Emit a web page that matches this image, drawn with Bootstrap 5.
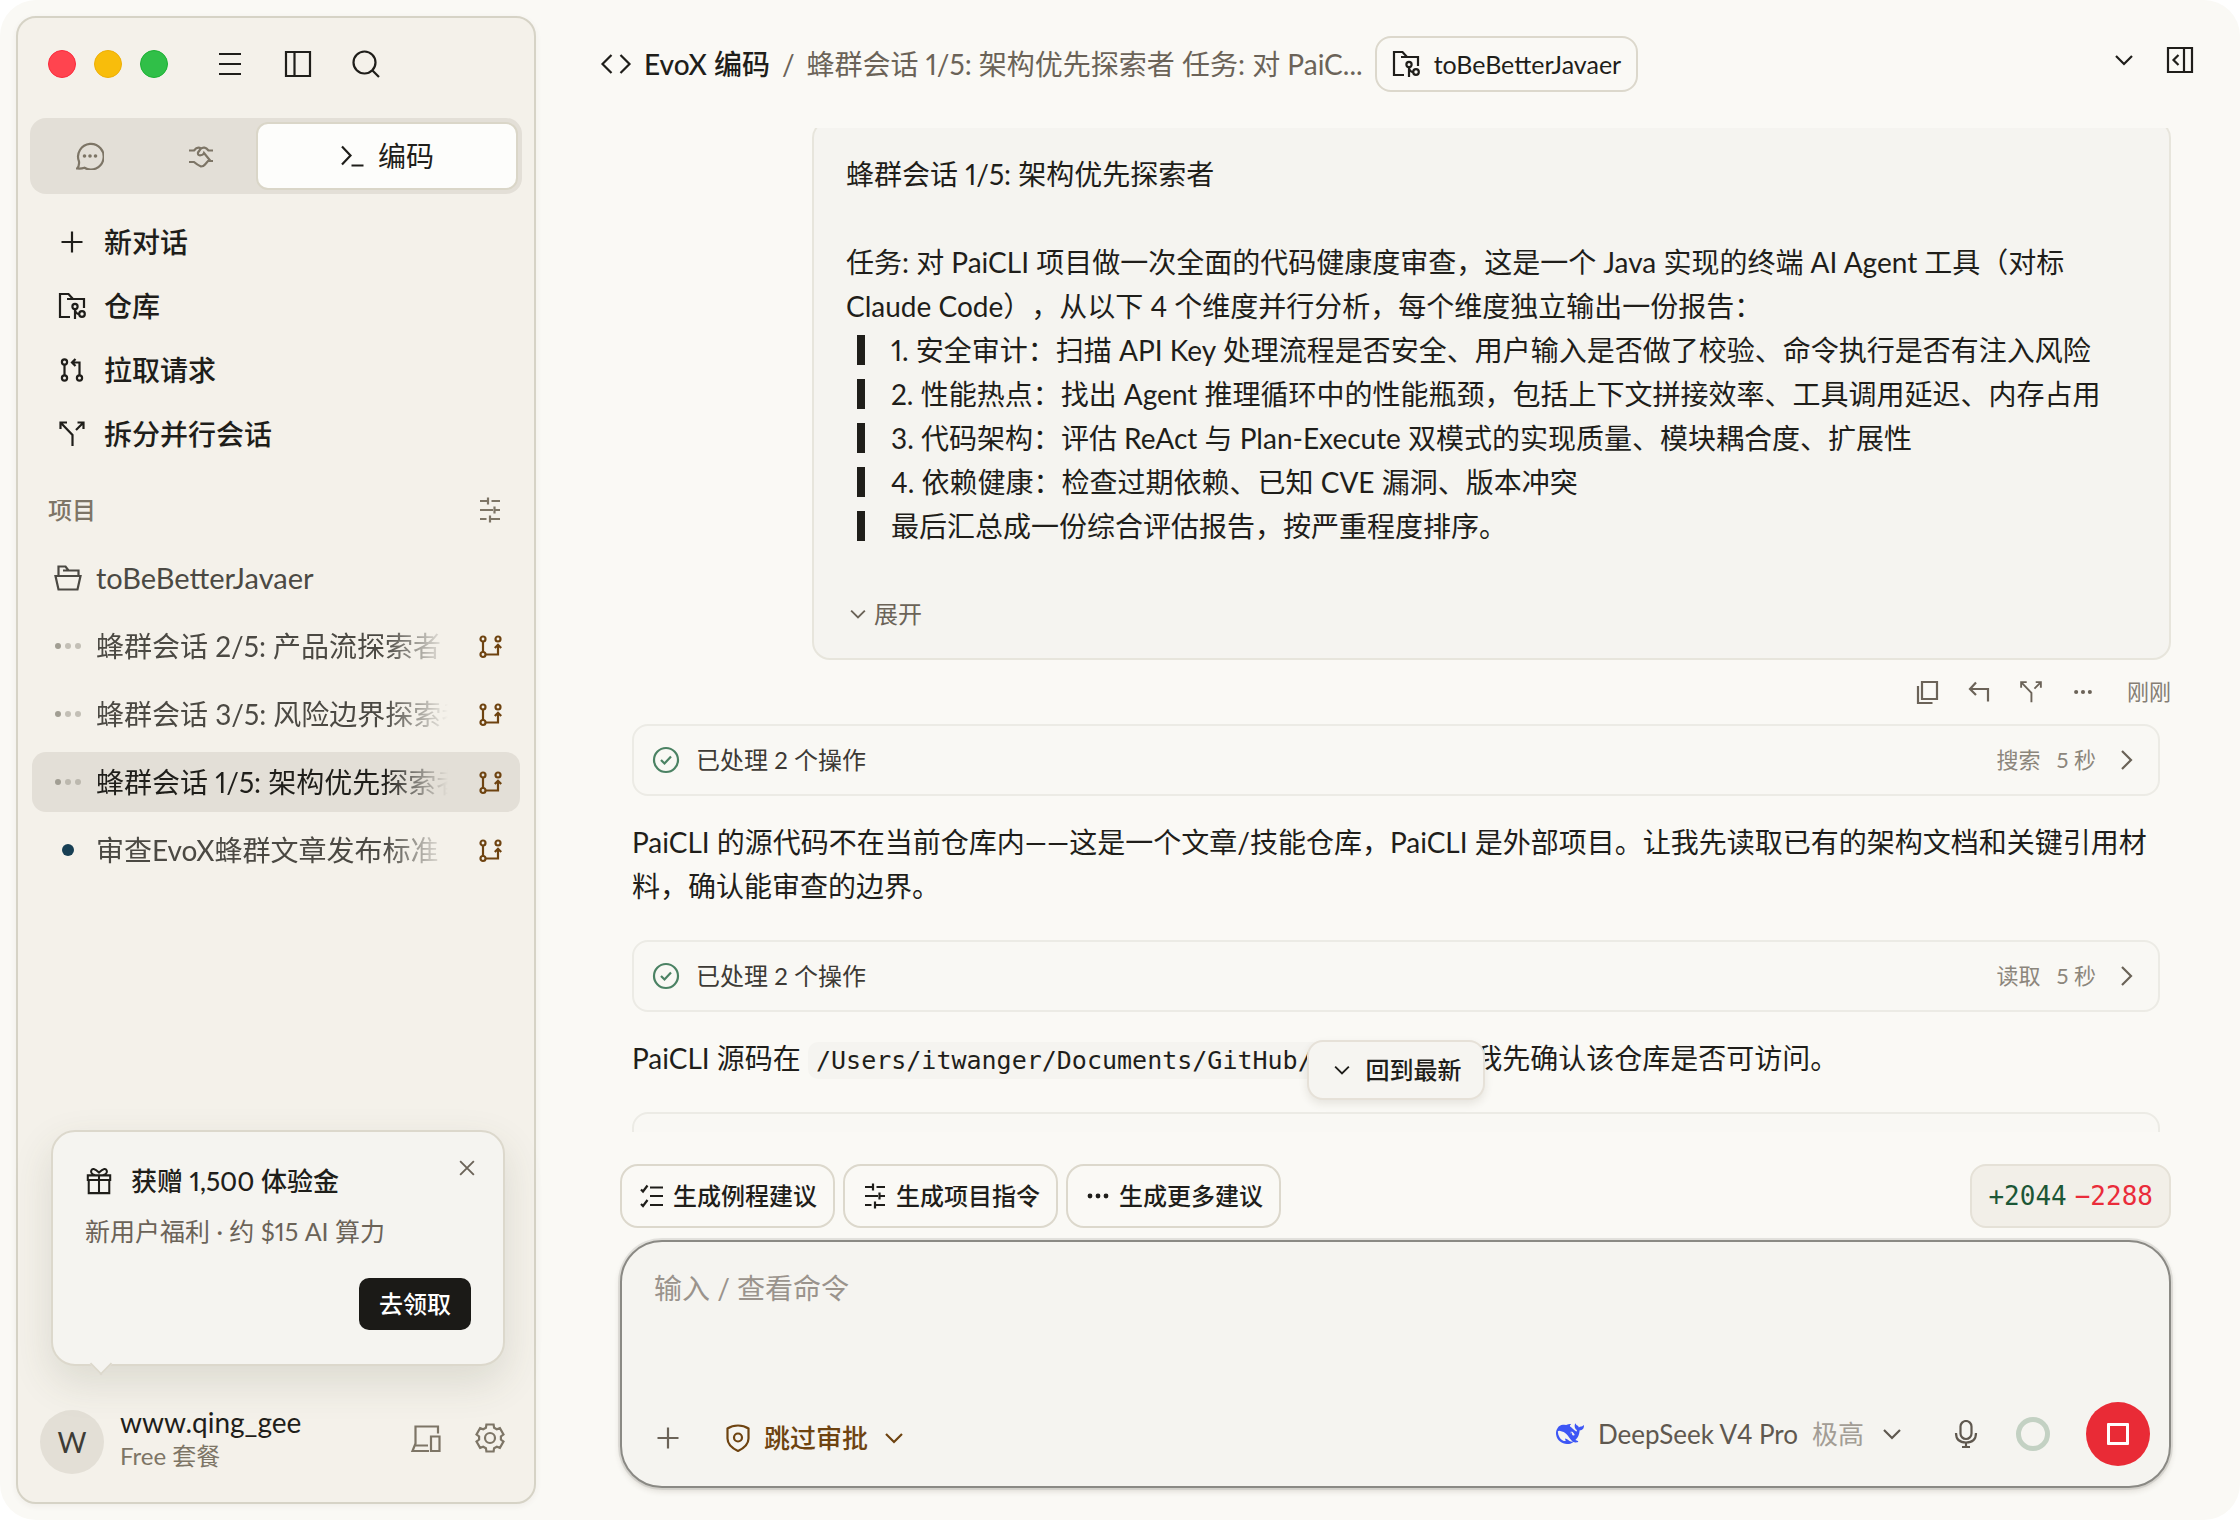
<!DOCTYPE html>
<html lang="zh-CN">
<head>
<meta charset="utf-8">
<meta name="viewport" content="width=device-width, initial-scale=1">
<title>EvoX 编码</title>
<link href="https://cdn.jsdelivr.net/npm/bootstrap@5.3.0/dist/css/bootstrap.min.css" rel="stylesheet">
<style>
  :root { --ink:#1f1e1a; --soft:#4b4943; --muted:#6b6358; --dim:#7d7566; --line:#dcd8cc; --paper:#faf9f5; --card:#f5f4f0; --side:#f4f1ea; --sel:#e3dfd7; --brown:#6e4310; }
  html { background:#fff; }
  body { font-family:Lato, "Noto Sans CJK SC", sans-serif; font-size:28px; line-height:44px; font-variant-numeric:proportional-nums; text-spacing-trim:space-all; color:var(--ink); background:transparent; }
  .ico { width:28px; height:28px; flex:none; fill:none; stroke:currentColor; stroke-width:2.2; display:block; overflow:visible; }
  .ico-s { width:24px; height:24px; }
  .ico-l { width:32px; height:32px; }
  .ico-ok { color:#4b8263; }
  .btn { --bs-btn-color:inherit; font-size:inherit; line-height:inherit; }
  .ibtn { padding:0; border:0; color:inherit; line-height:1; }
  .shell { background:var(--paper); border-radius:36px; height:100vh; overflow:hidden; }
  .tone-m { color:var(--muted); }

  .side { width:520px; margin:16px 0 16px 16px; background:var(--side); border:2px solid #d6d3c6; border-radius:20px; flex:none; box-shadow:0 2px 6px rgba(60,50,30,.06); }
  .titlebar { height:92px; padding:0 30px; margin-bottom:8px; }
  .light { width:28px; height:28px; border-radius:50%; border:1px solid; }
  .light-r { background:#ff444f; border-color:#fb2a3c; }
  .light-y { background:#f8bd0b; border-color:#eeaf06; }
  .light-g { background:#30bf48; border-color:#1bb133; }
  .lights { gap:18px; margin-right:48px; }
  .tools { gap:40px; }
  .tabs { margin:0 12px; height:76px; padding:4px; background:var(--sel); border-radius:16px; color:var(--dim); }
  .tabs .nav-link { border-radius:12px; padding:0; color:var(--dim); border:2px solid transparent; }
  .tab-a { width:111px; }
  .tabs .nav-link.active { flex:1; background:#fdfdfb; color:var(--ink); border-color:#dad6c8; gap:14px; }
  .menu { margin-top:16px; }
  .menu .nav-link { height:64px; padding:0 40px; gap:18px; color:var(--ink); font-weight:500; }
  .sect { height:56px; margin:16px 0 10px; padding:0 30px; font-size:24px; color:var(--dim); font-weight:500; }
  .proj { gap:8px; padding:0 14px; }
  .proj .nav-link { height:60px; padding:0 16px 0 22px; gap:14px; color:var(--soft); border-radius:14px; }
  .proj .nav-link.active { background:var(--sel); color:var(--ink); }
  .proj .root-dir { font-size:29px; }
  .fade-t { flex:1; min-width:0; overflow:hidden; white-space:nowrap; margin-right:14px; -webkit-mask-image:linear-gradient(90deg,#000 82%,transparent); mask-image:linear-gradient(90deg,#000 82%,transparent); }
  .brn { color:var(--brown); font-weight:500; }

  .promo { margin:0 29px 0 33px; height:236px; border:2px solid var(--line); border-radius:24px; background:var(--card); padding:25px 32px 34px; box-shadow:0 16px 40px rgba(70,75,50,.14); }
  .promo::after { content:""; position:absolute; left:40px; bottom:-8px; width:16px; height:16px; background:var(--card); transform:rotate(45deg); border:2px solid var(--line); border-top:0; border-left:0; }
  .promo-t { font-size:26px; font-weight:500; gap:18px; line-height:48px; }
  .promo-s { font-size:25px; line-height:52px; color:var(--muted); }
  .promo-x { position:absolute; right:24px; top:24px; color:var(--muted); }
  .claim { height:52px; padding:0 20px; border-radius:10px; background:#1b1a17; color:#fff; font-size:24px; line-height:50px; font-weight:500; border:0; }
  .user { margin:44px 0 28px; padding:0 28px 0 22px; height:64px; }
  .avatar { width:64px; height:64px; border-radius:50%; background:#e3dfd6; font-size:28px; color:#3e3c36; margin-right:16px; }
  .u-text { padding-bottom:6px; }
  .u-name { font-size:28px; line-height:34px; }
  .u-plan { font-size:24px; line-height:34px; color:var(--dim); }
  .u-tools { gap:32px; padding-bottom:8px; color:var(--dim); }

  .top { height:128px; padding:0 46px 0 64px; flex:none; }
  .crumb { gap:12px; }
  .crumb-app { font-weight:500; }
  .repo { height:56px; border:2px solid var(--line); border-radius:16px; padding:0 15px; font-size:25px; gap:14px; }
  .feed { flex:1; min-height:0; overflow:hidden; padding:0 69px 0 84px; }
  .ask { margin:-8px 0 0 192px; border:2px solid #e7e5dc; border-radius:18px; background:var(--card); padding:30px 32px 26px; }
  .quote-row { gap:26px; padding-left:11px; }
  .quote-row::before { content:""; width:8px; height:30px; background:var(--ink); flex:none; }
  .more { font-size:24px; line-height:36px; color:var(--muted); gap:4px; margin-top:48px; }
  .acts { height:64px; gap:28px; color:var(--muted); }
  .acts time { font-size:22px; margin-left:4px; color:#857e74; }
  .op { margin:0 11px 0 12px; height:72px; border:2px solid #ecebe5; border-radius:16px; background:#f9f8f4; padding:0 18px; font-size:24px; color:#3d3a35; }
  .op-r { font-size:22px; gap:16px; color:#8c867c; }
  .say { margin:24px 11px 32px 12px; }
  .say code { font-family:"DejaVu Sans Mono", monospace; font-size:25px; line-height:36px; color:var(--ink); background:var(--card); border-radius:10px; padding:4px 8px; }
  .latest-wrap { position:absolute; left:0; right:0; bottom:32px; padding:0 69px 0 84px; pointer-events:none; }
  .latest { pointer-events:auto; height:60px; width:178px; border:2px solid #e6e1d8; border-radius:16px; background:#f6f5f1; font-size:24px; font-weight:500; gap:12px; padding:0; box-shadow:0 4px 8px rgba(60,50,30,.1); }
  .dock { padding:32px 69px 32px 84px; }
  .sug { height:64px; border:2px solid var(--line); border-radius:18px; font-size:24px; font-weight:500; padding:0 16px; gap:7px; }
  .sug:hover, .repo:hover { border-color:var(--line); }
  .diff { height:64px; border:2px solid #e5e1d7; border-radius:16px; background:#f2efe8; font-family:"DejaVu Sans Mono", monospace; font-size:26px; padding:0 16px; gap:8px; }
  .plus-n { color:#1c5736; } .minus-n { color:#ea2c3a; }
  .composer { margin-top:12px; height:248px; border:2px solid #8a8984; border-radius:42px; background:var(--card); padding:24px 19px 20px 32px; box-shadow:0 0 0 2px rgba(120,118,110,.16), 0 3px 6px rgba(60,50,30,.16); }
  .composer textarea { resize:none; border:0; padding:0; background:transparent; font-size:28px; line-height:44px; color:var(--ink); border-radius:0; }
  .composer textarea::placeholder { color:#9a938c; opacity:1; }
  .composer textarea:focus { background:transparent; box-shadow:none; }
  .c-left { padding-top:8px; gap:42px; color:var(--muted); font-size:26px; }
  .c-right { color:#5f584f; font-size:26px; gap:36px; }
  .model { gap:14px; margin-right:10px; }
  .level { color:#a39d95; }
  .ring { width:34px; height:34px; border:5px solid #c3d1c3; border-radius:50%; }
  .stop { width:64px; height:64px; border-radius:50%; background:#e92b36; border:0; padding:21px; }
  .stop span { display:block; width:22px; height:22px; border:3px solid #fff; border-radius:1px; }
</style>
<script src="https://cdn.jsdelivr.net/npm/bootstrap@5.3.0/dist/js/bootstrap.bundle.min.js"></script>
</head>
<body>
<svg width="0" height="0" class="position-absolute" aria-hidden="true">
  <symbol id="menu" viewBox="0 0 28 28"><path d="M3 4h22M3 14h22M3 24h22"/></symbol>
  <symbol id="panel" viewBox="0 0 28 28"><path d="M2 2h24v24H2zM10.500 2v24"/></symbol>
  <symbol id="search" viewBox="0 0 28 28"><circle cx="12.500" cy="12.500" r="11"/><path d="M20.500 20.500l6.500 6.500"/></symbol>
  <symbol id="chat" viewBox="0 0 28 28"><path d="M3 19.500A12.800 12.800 0 1 1 8.500 25.800Q5 27 1 26.500Q3.500 24 3 19.500z"/><g fill="currentColor" stroke="none"><circle cx="8.500" cy="14" r="1.800"/><circle cx="14" cy="14" r="1.800"/><circle cx="19.500" cy="14" r="1.800"/></g></symbol>
  <symbol id="shake" viewBox="0 0 24 24"><path d="M0 6.500h5Q8.500 2 12 4.500M24 6.500h-4.500Q15.500 1.500 11.500 5L9 8.500q-.5 2.800 2 2.800 3.200 0 4-2.300L21.500 17M0 18h5q3.500 3 7 4.500 2.500 0 4-2l3-3.500h5"/></symbol>
  <symbol id="term" viewBox="0 0 24 24"><path d="M2 2.500l8.500 9L2 20.500M11.500 21.500h12"/></symbol>
  <symbol id="add" viewBox="0 0 28 28"><path d="M3.500 14h21M14 3.500v21"/></symbol>
  <symbol id="repo" viewBox="0 0 28 28"><path d="M12 25H2V2h8.500L15 7h11v9M9 7h7M17 17v10M17 18q1 4 4 4"/><circle cx="17" cy="14.500" r="2.600"/><circle cx="24" cy="22" r="2.800"/></symbol>
  <symbol id="pr" viewBox="0 0 28 28"><circle cx="6.500" cy="6" r="2.600"/><circle cx="6.500" cy="22" r="2.600"/><circle cx="21.500" cy="22" r="2.600"/><path d="M6.500 9v10M21.500 19V6.500H14M17.500 3L14 6.500l3.500 3.500"/></symbol>
  <symbol id="split" viewBox="0 0 28 28"><path d="M14.500 26V15L3 3M2.500 9V2.500H9M18 10l7-7M19.500 2.500h6V9"/></symbol>
  <symbol id="filter" viewBox="0 0 28 28"><path d="M4 5h8M12 1.500v7M15.500 5H24M4 14h13M18.500 10.500v7M18.500 14H24M4 23h6.500M14 19.500v7M14 23h10"/></symbol>
  <symbol id="folder" viewBox="0 0 28 28"><path d="M4.500 12V2.500h7l3 4h10V12M9 6.500h6M1.500 12h25l-3 13.500h-19z"/></symbol>
  <symbol id="dots3" viewBox="0 0 28 28"><g fill="#a19e93" stroke="none"><circle cx="4" cy="14" r="3"/><circle cx="14" cy="14" r="3" opacity=".6"/><circle cx="24" cy="14" r="3" opacity=".6"/></g></symbol>
  <symbol id="dot1" viewBox="0 0 28 28"><circle cx="14" cy="14" r="6" fill="#173f54" stroke="none"/></symbol>
  <symbol id="branch" viewBox="0 0 28 28"><circle cx="7" cy="7" r="2.500"/><circle cx="22" cy="7" r="2.500"/><circle cx="7" cy="22.500" r="2.500"/><path d="M7 10v10M10 22.500h12V14M18.800 16l3.200-3.200 3.200 3.200"/></symbol>
  <symbol id="gift" viewBox="0 0 28 30"><path d="M2 9h24v5H2zM3 14h22v14H3zM14 9v19M14 9Q5 9 5.500 4.500 7-1 14 6 21-1 22.500 4.500 23 9 14 9"/></symbol>
  <symbol id="close" viewBox="0 0 28 28"><path d="M6 6l16 16M22 6L6 22"/></symbol>
  <symbol id="device" viewBox="0 0 32 32"><path d="M28 11.500V4.500H5.500v17L2.500 29H19M5.500 23.500H18M21 14.500h8.500V29H21z"/></symbol>
  <symbol id="gear" viewBox="-16 -16 32 32"><path d="M-3.600-13.500H3.600L4.100-10.200 6.800-8.700 9.900-9.900 13.500-3.600 10.900-1.500V1.500L13.500 3.600 9.900 9.900 6.800 8.700 4.100 10.200 3.600 13.500H-3.600L-4.100 10.200-6.800 8.700-9.900 9.900-13.500 3.600-10.900 1.500V-1.500L-13.500-3.600-9.900-9.900-6.800-8.700-4.100-10.200z"/><circle r="5"/></symbol>
  <symbol id="code" viewBox="0 0 32 32"><path d="M11.500 7L2.500 16l9 9M20.500 7l9 9-9 9"/></symbol>
  <symbol id="down" viewBox="0 0 28 28"><path d="M6 10l8 8 8-8"/></symbol>
  <symbol id="right" viewBox="0 0 28 28"><path d="M10 5l9 9-9 9"/></symbol>
  <symbol id="panelr" viewBox="0 0 28 28"><path d="M2 2h24v24H2zM18 2v24M12.500 9l-5 5 5 5"/></symbol>
  <symbol id="copy" viewBox="0 0 24 24"><path d="M7 2h15v17H7zM3 6v17h14.500"/></symbol>
  <symbol id="reply" viewBox="0 0 24 24"><path d="M9 2.500L3 9l6 6M3 9h18v12.500"/></symbol>
  <symbol id="ell" viewBox="0 0 28 28"><g fill="currentColor" stroke="none"><circle cx="6" cy="14" r="2.400"/><circle cx="14" cy="14" r="2.400"/><circle cx="22" cy="14" r="2.400"/></g></symbol>
  <symbol id="ok" viewBox="0 0 28 28"><circle cx="14" cy="14" r="12"/><path d="M9 14l3.500 3.500 6.500-7"/></symbol>
  <symbol id="tasks" viewBox="0 0 28 28"><path d="M12 5.500h13M12 14h13M12 23h13M3 7.500l2 2 4.500-6M3 22l2 2 4.500-6"/></symbol>
  <symbol id="shield" viewBox="0 0 28 28"><path d="M14 1.500q6 0 10.500 3v10Q24.500 22 14 27 3.500 22 3.500 14.500v-10Q8 1.500 14 1.500z"/><circle cx="14" cy="13.500" r="4"/></symbol>
  <symbol id="mic" viewBox="0 0 28 28"><rect x="8.500" y="1" width="11" height="18" rx="5.500"/><path d="M4 13q0 9.500 10 9.500t10-9.500M14 22.500v4M10 27h8"/></symbol>
  <symbol id="whale" viewBox="0 0 24 24"><path fill="#3d56f5" stroke="none" d="M23.748 4.482c-.254-.124-.364.113-.512.234-.051.039-.094.09-.137.136-.372.397-.806.657-1.373.626-.829-.046-1.537.214-2.163.848-.133-.782-.575-1.248-1.247-1.548-.352-.156-.708-.311-.955-.65-.172-.241-.219-.51-.305-.774-.055-.16-.11-.323-.293-.35-.2-.031-.278.136-.356.276-.313.572-.434 1.202-.422 1.84.027 1.436.633 2.58 1.838 3.393.137.093.172.187.129.323-.082.28-.18.552-.266.833-.055.179-.137.217-.329.14a5.526 5.526 0 01-1.736-1.18c-.857-.828-1.631-1.742-2.597-2.458a11.365 11.365 0 00-.689-.471c-.985-.957.13-1.743.388-1.836.27-.098.093-.432-.779-.428-.872.004-1.67.295-2.687.684a3.055 3.055 0 01-.465.137 9.597 9.597 0 00-2.883-.102c-1.885.21-3.39 1.102-4.497 2.623C.082 8.606-.231 10.684.152 12.850c.403 2.284 1.569 4.175 3.360 5.653 1.858 1.533 3.997 2.284 6.438 2.140 1.482-.085 3.133-.284 4.994-1.860.470.234.962.327 1.780.397.630.059 1.236-.030 1.705-.128.735-.156.684-.837.419-.961-2.155-1.004-1.682-.595-2.113-.926 1.096-1.296 2.746-2.642 3.392-7.003.050-.347.007-.565 0-.845-.004-.170.035-.237.230-.256a4.173 4.173 0 001.545-.475c1.396-.763 1.960-2.015 2.093-3.517.020-.230-.004-.467-.247-.588zM11.581 18c-2.089-1.642-3.102-2.183-3.520-2.160-.392.024-.321.471-.235.763.090.288.207.486.371.739.114.167.192.416-.113.603-.673.416-1.842-.140-1.897-.167-1.361-.802-2.500-1.860-3.301-3.307-.774-1.393-1.224-2.887-1.298-4.482-.020-.386.093-.522.477-.592a4.696 4.696 0 011.529-.039c2.132.312 3.946 1.265 5.468 2.774.868.860 1.525 1.887 2.202 2.891.720 1.066 1.494 2.082 2.480 2.914.348.292.625.514.891.677-.802.090-2.140.110-3.054-.614zm1-6.440a.306.306 0 01.415-.287.302.302 0 01.200.288.306.306 0 01-.310.307.303.303 0 01-.304-.308zm3.110 1.596c-.200.081-.399.151-.590.160a1.245 1.245 0 01-.798-.254c-.274-.230-.470-.358-.552-.758a1.730 1.730 0 01.016-.588c.070-.327-.008-.537-.239-.727-.187-.156-.426-.199-.688-.199a.559.559 0 01-.254-.078c-.110-.054-.200-.190-.114-.358.028-.054.160-.186.192-.210.356-.202.767-.136 1.146.016.352.144.618.408 1.001.782.391.451.462.576.685.914.176.265.336.537.445.848.067.195-.019.354-.250.452z"/></symbol>
</svg>

<div class="shell d-flex">
  <aside class="side d-flex flex-column">
    <div class="titlebar d-flex align-items-center">
      <div class="lights d-flex"><span class="light light-r"></span><span class="light light-y"></span><span class="light light-g"></span></div>
      <div class="tools d-flex">
        <button class="btn ibtn" aria-label="菜单"><svg class="ico"><use href="#menu"/></svg></button>
        <button class="btn ibtn" aria-label="侧栏"><svg class="ico"><use href="#panel"/></svg></button>
        <button class="btn ibtn" aria-label="搜索"><svg class="ico"><use href="#search"/></svg></button>
      </div>
    </div>
    <div class="tabs nav nav-pills flex-nowrap">
      <button class="nav-link tab-a d-flex align-items-center justify-content-center" aria-label="聊天"><svg class="ico"><use href="#chat"/></svg></button>
      <button class="nav-link tab-a d-flex align-items-center justify-content-center" aria-label="协作"><svg class="ico ico-s"><use href="#shake"/></svg></button>
      <button class="nav-link active d-flex align-items-center justify-content-center"><svg class="ico ico-s"><use href="#term"/></svg>编码</button>
    </div>
    <nav class="menu nav flex-column">
      <a class="nav-link d-flex align-items-center" href="#"><svg class="ico"><use href="#add"/></svg>新对话</a>
      <a class="nav-link d-flex align-items-center" href="#"><svg class="ico"><use href="#repo"/></svg>仓库</a>
      <a class="nav-link d-flex align-items-center" href="#"><svg class="ico"><use href="#pr"/></svg>拉取请求</a>
      <a class="nav-link d-flex align-items-center" href="#"><svg class="ico"><use href="#split"/></svg>拆分并行会话</a>
    </nav>
    <div class="sect d-flex align-items-center justify-content-between">项目<button class="btn ibtn" aria-label="筛选"><svg class="ico"><use href="#filter"/></svg></button></div>
    <nav class="proj nav flex-column flex-nowrap">
      <a class="nav-link root-dir d-flex align-items-center" href="#"><svg class="ico"><use href="#folder"/></svg>toBeBetterJavaer</a>
      <a class="nav-link d-flex align-items-center" href="#"><svg class="ico"><use href="#dots3"/></svg><span class="fade-t">蜂群会话 2/5: 产品流探索者 任务</span><svg class="ico brn"><use href="#branch"/></svg></a>
      <a class="nav-link d-flex align-items-center" href="#"><svg class="ico"><use href="#dots3"/></svg><span class="fade-t">蜂群会话 3/5: 风险边界探索者</span><svg class="ico brn"><use href="#branch"/></svg></a>
      <a class="nav-link active d-flex align-items-center" href="#" aria-current="page"><svg class="ico"><use href="#dots3"/></svg><span class="fade-t">蜂群会话 1/5: 架构优先探索者</span><svg class="ico brn"><use href="#branch"/></svg></a>
      <a class="nav-link d-flex align-items-center" href="#"><svg class="ico"><use href="#dot1"/></svg><span class="fade-t">审查EvoX蜂群文章发布标准</span><svg class="ico brn"><use href="#branch"/></svg></a>
    </nav>
    <section class="promo position-relative mt-auto d-flex flex-column">
      <button class="btn ibtn promo-x" aria-label="关闭"><svg class="ico ico-s"><use href="#close"/></svg></button>
      <div class="promo-t d-flex align-items-center"><svg class="ico"><use href="#gift"/></svg>获赠 1,500 体验金</div>
      <div class="promo-s">新用户福利 · 约 $15 AI 算力</div>
      <button class="btn claim align-self-end mt-auto">去领取</button>
    </section>
    <div class="user d-flex align-items-center">
      <div class="avatar d-flex align-items-center justify-content-center">W</div>
      <div class="u-text me-auto"><div class="u-name">www.qing_gee</div><div class="u-plan">Free 套餐</div></div>
      <div class="u-tools d-flex align-items-center">
        <button class="btn ibtn" aria-label="设备"><svg class="ico ico-l"><use href="#device"/></svg></button>
        <button class="btn ibtn" aria-label="设置"><svg class="ico ico-l"><use href="#gear"/></svg></button>
      </div>
    </div>
  </aside>

  <main class="d-flex flex-column flex-grow-1 overflow-hidden">
    <header class="top d-flex align-items-center">
      <div class="crumb d-flex align-items-center me-auto">
        <svg class="ico ico-l"><use href="#code"/></svg><span class="crumb-app">EvoX 编码</span>
        <span class="tone-m">/</span>
        <span class="tone-m">蜂群会话 1/5: 架构优先探索者 任务: 对 PaiC...</span>
        <button class="btn repo d-flex align-items-center"><svg class="ico"><use href="#repo"/></svg>toBeBetterJavaer</button>
      </div>
      <div class="d-flex gap-4 pb-2">
        <button class="btn ibtn me-1" aria-label="展开菜单"><svg class="ico"><use href="#down"/></svg></button>
        <button class="btn ibtn" aria-label="右侧栏"><svg class="ico"><use href="#panelr"/></svg></button>
      </div>
    </header>

    <div class="position-relative d-flex flex-column flex-grow-1 overflow-hidden">
      <div class="feed">
        <article class="ask">
          <div>蜂群会话 1/5: 架构优先探索者</div>
          <br>
          <div>任务: 对 PaiCLI 项目做一次全面的代码健康度审查，这是一个 Java 实现的终端 AI Agent 工具（对标 Claude Code），从以下 4 个维度并行分析，每个维度独立输出一份报告：</div>
          <div class="quote-row d-flex align-items-center">1. 安全审计：扫描 API Key 处理流程是否安全、用户输入是否做了校验、命令执行是否有注入风险</div>
          <div class="quote-row d-flex align-items-center">2. 性能热点：找出 Agent 推理循环中的性能瓶颈，包括上下文拼接效率、工具调用延迟、内存占用</div>
          <div class="quote-row d-flex align-items-center">3. 代码架构：评估 ReAct 与 Plan-Execute 双模式的实现质量、模块耦合度、扩展性</div>
          <div class="quote-row d-flex align-items-center">4. 依赖健康：检查过期依赖、已知 CVE 漏洞、版本冲突</div>
          <div class="quote-row d-flex align-items-center">最后汇总成一份综合评估报告，按严重程度排序。</div>
          <button class="btn ibtn more d-flex align-items-center"><svg class="ico ico-s"><use href="#down"/></svg>展开</button>
        </article>
        <div class="acts d-flex align-items-center justify-content-end">
          <button class="btn ibtn" aria-label="复制"><svg class="ico ico-s"><use href="#copy"/></svg></button>
          <button class="btn ibtn" aria-label="回退"><svg class="ico ico-s"><use href="#reply"/></svg></button>
          <button class="btn ibtn" aria-label="分支"><svg class="ico ico-s"><use href="#split"/></svg></button>
          <button class="btn ibtn" aria-label="更多"><svg class="ico ico-s"><use href="#ell"/></svg></button>
          <time>刚刚</time>
        </div>
        <div class="op d-flex align-items-center">
          <svg class="ico ico-ok me-3"><use href="#ok"/></svg>已处理 2 个操作
          <div class="op-r d-flex align-items-center ms-auto"><span>搜索</span><span>5 秒</span><svg class="ico tone-m"><use href="#right"/></svg></div>
        </div>
        <p class="say">PaiCLI 的源代码不在当前仓库内——这是一个文章/技能仓库，PaiCLI 是外部项目。让我先读取已有的架构文档和关键引用材料，确认能审查的边界。</p>
        <div class="op d-flex align-items-center">
          <svg class="ico ico-ok me-3"><use href="#ok"/></svg>已处理 2 个操作
          <div class="op-r d-flex align-items-center ms-auto"><span>读取</span><span>5 秒</span><svg class="ico tone-m"><use href="#right"/></svg></div>
        </div>
        <p class="say">PaiCLI 源码在 <code>/Users/itwanger/Documents/GitHub/PaiCLI</code> ，让我先确认该仓库是否可访问。</p>
        <div class="op"></div>
      </div>
      <div class="latest-wrap d-flex justify-content-center">
        <button class="btn latest d-flex align-items-center justify-content-center"><svg class="ico ico-s"><use href="#down"/></svg>回到最新</button>
      </div>
    </div>

    <div class="dock">
      <div class="d-flex gap-2">
        <button class="btn sug d-flex align-items-center"><svg class="ico"><use href="#tasks"/></svg>生成例程建议</button>
        <button class="btn sug d-flex align-items-center"><svg class="ico"><use href="#filter"/></svg>生成项目指令</button>
        <button class="btn sug d-flex align-items-center"><svg class="ico"><use href="#ell"/></svg>生成更多建议</button>
        <div class="diff d-flex align-items-center ms-auto"><span class="plus-n">+2044</span><span class="minus-n">−2288</span></div>
      </div>
      <div class="composer d-flex flex-column justify-content-between">
        <textarea class="form-control" rows="2" placeholder="输入 / 查看命令" aria-label="输入消息"></textarea>
        <div class="d-flex align-items-center justify-content-between">
          <div class="c-left d-flex align-items-center">
            <button class="btn ibtn" aria-label="添加"><svg class="ico"><use href="#add"/></svg></button>
            <button class="btn ibtn brn d-flex align-items-center gap-2"><svg class="ico me-1"><use href="#shield"/></svg>跳过审批<svg class="ico ms-1"><use href="#down"/></svg></button>
          </div>
          <div class="c-right d-flex align-items-center">
            <button class="btn ibtn model d-flex align-items-center"><svg class="ico"><use href="#whale"/></svg>DeepSeek V4 Pro<span class="level">极高</span><svg class="ico"><use href="#down"/></svg></button>
            <button class="btn ibtn" aria-label="语音"><svg class="ico"><use href="#mic"/></svg></button>
            <span class="ring"></span>
            <button class="btn stop" aria-label="停止"><span></span></button>
          </div>
        </div>
      </div>
    </div>
  </main>
</div>
</body>
</html>
